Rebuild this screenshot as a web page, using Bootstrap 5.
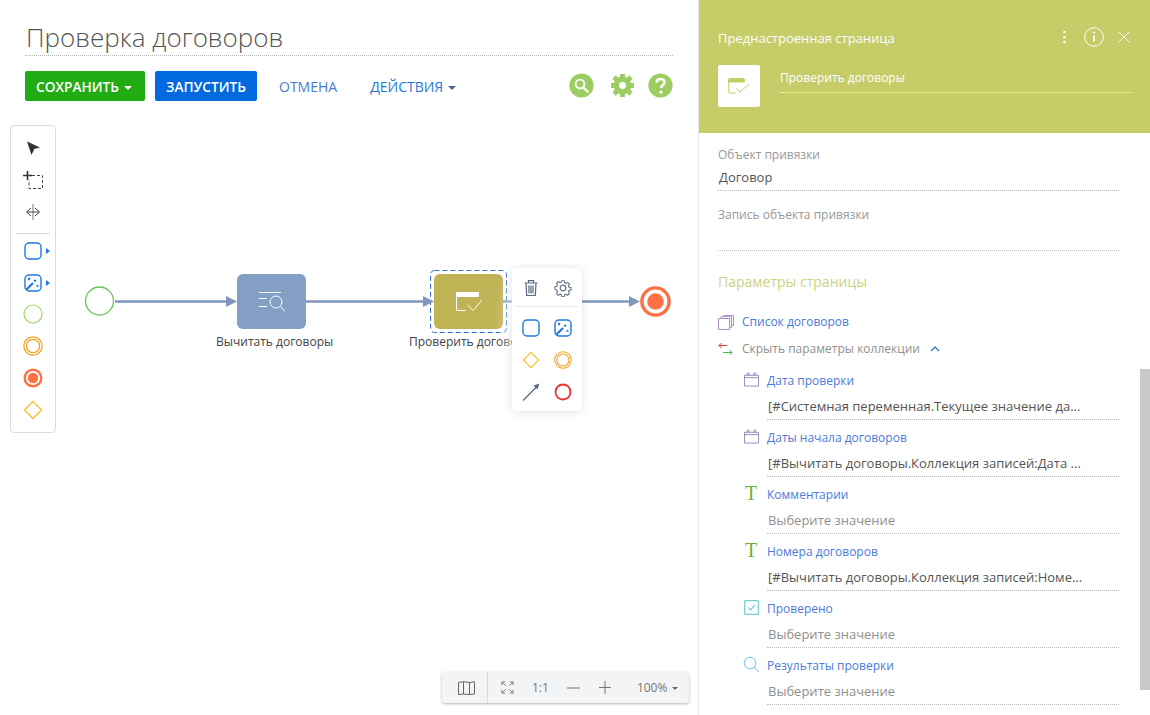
<!DOCTYPE html>
<html lang="ru">
<head>
  <meta charset="UTF-8" />
  <title>Проверка договоров</title>
  <link href="https://cdn.jsdelivr.net/npm/bootstrap@5.3.0/dist/css/bootstrap.min.css" rel="stylesheet" />
  <style>
    html, body { height: 100%; overflow: hidden; }
    body { font-family: "Open Sans", "Liberation Sans", sans-serif; font-size: 13px; color: #444; background: #fff; }
    .shell { height: 715px; }
    .left-col { width: 699px; border-right: 1px solid #e8e8e8; }
    .right-col { width: 451px; }

    .page-head { padding: 19px 25px 0 25px; height: 115px; }
    .page-title { font-size: 26px; font-weight: 300; line-height: 36px; color: #555; height: 37px; border-bottom: 1px dotted #b5b5b5; margin: 0; padding-left: 1px; }
    .action-bar { margin-top: 15px; height: 30px; }
    .act-btn { height: 30px; font-size: 13.7px; font-weight: 600; line-height: 31px; padding: 0 11px; border: 0; border-radius: 2px; color: #fff; }
    .act-save { background: #22ac14; width: 120px; margin-right: 10px; text-align: left; }
    .act-run { background: #0069e0; width: 102px; }
    .act-save:hover, .act-run:hover { color: #fff; }
    .act-link { font-size: 14px; color: #4a7bd8; text-decoration: none; }
    .act-cancel { margin-left: 22px; }
    .act-more { margin-left: 33px; color: #1c77e0; }
    .act-caret { display: inline-block; margin-left: 5px; vertical-align: 2px; border-top: 4px solid #4c6591; border-left: 4px solid transparent; border-right: 4px solid transparent; }
    .act-save .act-caret { border-top-color: #fff; margin-left: 5px; }
    .head-icons { margin-left: auto; margin-top: -2px; margin-right: 0; }
    .head-search { margin-right: 16px; }
    .head-gear { margin-right: 13px; }

    .canvas { height: 600px; }
    .tool-box { position: absolute; left: 10px; top: 10px; width: 46px; height: 308px; background: #fff; border: 1px solid #dcdcdc; border-radius: 4px; padding-top: 6px; }
    .tool-row { height: 32px; }
    .tool-first-event { margin-top: -1px; }
    .tool-sep { height: 1px; background: #d9d9d9; margin: 5px 5px 1px 5px; }
    .wires { position: absolute; left: 0; top: 0; }
    .node { position: absolute; top: 159px; width: 69px; height: 55px; border-radius: 6px; }
    .node-read { left: 237px; background: #839fc4; }
    .node-page { left: 434px; background: #c0b355; }
    .node-label { position: absolute; top: 219px; font-size: 12px; line-height: 16px; color: #444; white-space: nowrap; }
    .label-read { left: 216px; }
    .label-page { left: 409px; }
    .pop-menu { position: absolute; left: 512px; top: 153px; width: 70px; height: 143px; background: #fff; border-radius: 4px; box-shadow: 0 1px 8px rgba(60,70,90,.16), -8px 10px 14px -6px rgba(255,255,255,.9); }
    .pop-top { height: 39px; margin: 0 3px; border-bottom: 1px solid #e8eaf0; padding-top: 2px; display: grid; grid-template-columns: 32px 32px; justify-content: center; }
    .pop-grid { display: grid; grid-template-columns: 32px 32px; grid-auto-rows: 32px; justify-content: center; padding-top: 5px; }
    .zoom-bar { position: absolute; left: 442px; top: 557px; width: 247px; height: 31px; background: #f3f4f6; border-radius: 3px; box-shadow: 0 1px 3px rgba(0,0,0,.3); color: #777; font-size: 12px; }
    .zoom-map { width: 46px; height: 100%; border-right: 1px solid #d8d9dc; padding-left: 3px; }
    .zoom-items { flex: 1; padding-left: 13px; }
    .zoom-one { margin-left: 18px; }
    .zoom-minus { margin-left: 18px; }
    .zoom-plus { margin-left: 19px; }
    .zoom-pct { margin-left: 26px; }
    .zoom-caret { display: inline-block; margin-left: 5px; vertical-align: 2px; border-top: 3px solid #666; border-left: 3px solid transparent; border-right: 3px solid transparent; }

    .panel-head { height: 133px; background: #c5cc68; color: #fff; padding: 0 18px 0 19px; }
    .panel-title-row { height: 45px; padding-top: 19px; }
    .panel-title { font-size: 13px; font-weight: 500; line-height: 38px; height: 30px; }
    .panel-tools { margin-left: auto; margin-right: 2px; margin-top: 5px; height: 26px; }
    .panel-dots { margin-right: 18px; }
    .panel-info { margin-right: 14px; }
    .panel-sub { margin-top: 20px; }
    .panel-ico { width: 42px; height: 42px; background: #fff; border-radius: 2px; }
    .panel-name { flex: 1; margin-left: 20px; height: 28px; margin-bottom: 14px; font-size: 12px; font-weight: 500; line-height: 26px; border-bottom: 1px dotted #fff; }

    .panel-body { padding: 0 31px 0 19px; }
    .scroll-thumb { position: absolute; left: 441px; top: 369px; width: 10px; height: 321px; background: #c9c9c9; }
    .fld-cap { color: #999; font-size: 12px; line-height: 16px; }
    .fld-cap-top { margin-top: 14px; }
    .fld-cap-next { margin-top: 16px; }
    .fld-box { border-bottom: 1px dotted #b9b9b9; font-size: 13px; color: #555; line-height: 18px; height: 28px; }
    .fld-filled { padding: 5px 0 0 1px; }
    .sect-title { font-size: 14px; font-weight: 500; color: #cdd27f; line-height: 20px; margin-top: 21px; }
    .sub-link { color: #4a7bd8; font-size: 12px; line-height: 18px; }
    .sub-gray { color: #909090; font-size: 12px; line-height: 18px; }
    .param-ico { width: 24px; flex: none; }
    .sub-line { height: 18px; }
    .sub-list { margin-top: 21px; }
    .sub-coll { margin-top: 9px; }
    .sub-chev { margin-left: 10px; }
    #paramList { margin-top: 5px; }
    .param-row { height: 57px; margin-left: 25px; padding-top: 8px; }
    .param-head { height: 20px; }
    .param-ico-in { width: 24px; flex: none; margin-top: -4px; }
    .ico-cal, .ico-chk { margin-left: 1px; }
    .ico-txt { display: block; font: 20px/20px "Liberation Serif", serif; color: #6db02c; margin-left: 2px; }
    .param-val { margin-left: 24px; height: 29px; padding: 6px 0 0 1px; border-bottom: 1px dotted #b9b9b9; font-size: 13px; line-height: 18px; color: #555; white-space: nowrap; }
    .param-empty { color: #909090; }
  </style>
</head>
<body>
  <!-- повторяющиеся значки элементов процесса -->
  <svg width="0" height="0" class="position-absolute">
    <symbol id="ico-task" viewBox="0 0 18 18"><rect x="1" y="1" width="16" height="16" rx="4" fill="none" stroke="#1f78e0" stroke-width="1.4"/></symbol>
    <symbol id="ico-script" viewBox="0 0 18 18">
      <rect x="1" y="1" width="16" height="16" rx="4" fill="none" stroke="#1f78e0" stroke-width="1.4"/>
      <path d="M2.500 15.500 9 9" stroke="#1f78e0" stroke-width="2.200"/>
      <path d="M5 3l.6 1.200 1.200.2-.9.9.2 1.200-1.100-.6-1.100.6.2-1.200-.9-.9 1.200-.2zM11 5l.6 1 1.100.2-.8.8.2 1.100-1.100-.5-1 .5.2-1.100-.8-.8 1.100-.2zM13.500 10.500l.5.9 1 .2-.7.7.1 1-.9-.5-.9.5.1-1-.7-.7 1-.2z" fill="#1f78e0"/>
    </symbol>
    <symbol id="ico-gate" viewBox="0 0 20 20"><path d="M10 1.500 18.500 10 10 18.500 1.500 10z" fill="none" stroke="#fcbe2c" stroke-width="1.300"/></symbol>
    <symbol id="ico-mid" viewBox="0 0 20 20"><circle cx="10" cy="10" r="9.200" fill="none" stroke="#f5a021" stroke-width="1.200"/><circle cx="10" cy="10" r="6.700" fill="none" stroke="#f5a021" stroke-width="1.200"/></symbol>
  </svg>

  <div class="shell d-flex">
    <div class="left-col d-flex flex-column flex-shrink-0">
      <div class="page-head">
        <h1 class="page-title">Проверка договоров</h1>
        <div class="action-bar d-flex align-items-center">
          <button class="btn act-btn act-save">СОХРАНИТЬ<span class="act-caret"></span></button>
          <button class="btn act-btn act-run">ЗАПУСТИТЬ</button>
          <a class="act-link act-cancel" href="#">ОТМЕНА</a>
          <a class="act-link act-more" href="#">ДЕЙСТВИЯ<span class="act-caret"></span></a>
          <div class="head-icons d-flex align-items-center">
            <svg class="head-search" width="25" height="25" viewBox="0 0 26 26"><circle cx="13" cy="13" r="12.600" fill="#9ccd62"/><circle cx="11.500" cy="11.500" r="4.600" fill="none" stroke="#fff" stroke-width="2"/><path d="M15 15l4.500 4.500" stroke="#fff" stroke-width="2.200" stroke-linecap="round"/></svg>
            <svg class="head-gear" width="25" height="25" viewBox="0 0 26 26"><circle cx="13" cy="13" r="6.500" fill="none" stroke="#9ccd62" stroke-width="5.500"/><path d="M13 0.500v25M0.500 13h25M4.200 4.200l17.600 17.600M21.800 4.200 4.200 21.800" stroke="#9ccd62" stroke-width="5"/><circle cx="13" cy="13" r="3.600" fill="#fff"/><path d="M10.500 0h5v1h-5zM10.500 25h5v1h-5zM0 10.500h1v5H0zM25 10.500h1v5h-1z" fill="#fff"/></svg>
            <svg width="25" height="25" viewBox="0 0 26 26"><circle cx="13" cy="13" r="12.600" fill="#9ccd62"/><path d="M9 10.200c0-2.500 1.900-3.900 4.100-3.900 2.300 0 4 1.400 4 3.400 0 2.900-3.600 3-3.600 6" fill="none" stroke="#fff" stroke-width="2.600"/><circle cx="13.400" cy="20" r="1.700" fill="#fff"/></svg>
          </div>
        </div>
      </div>

      <div class="canvas position-relative">
        <svg class="wires" width="698" height="320">
          <rect x="430.500" y="155.500" width="76" height="62" rx="4" fill="none" stroke="#2f6fd6" stroke-dasharray="5 3"/>
          <g stroke="#7f97bb" stroke-width="2.400" fill="none">
            <path d="M115 186.500H230"/><path d="M306 186.500H428"/><path d="M503 186.500H633"/>
          </g>
          <g fill="#7f97bb">
            <path d="M226 181 237 186.500 226 192z"/><path d="M423 181 434 186.500 423 192z"/><path d="M629 181 640 186.500 629 192z"/>
          </g>
          <circle cx="99.500" cy="186" r="14" fill="#fff" stroke="#66c35a" stroke-width="1.300"/>
          <circle cx="655.500" cy="186.500" r="13.600" fill="#fff" stroke="#ff7143" stroke-width="3.400"/>
          <circle cx="655.500" cy="186.500" r="8.300" fill="#ff7143"/>
        </svg>

        <div class="node node-read d-flex align-items-center justify-content-center">
          <svg width="26" height="20" viewBox="0 0 26 20" fill="none" stroke="#fff" stroke-width="1"><path d="M0 .5H22M0 6.500H8M0 14.500H8"/><circle cx="17" cy="10" r="6"/><path d="M21.500 14.500 26 19.500"/></svg>
        </div>
        <div class="node-label label-read">Вычитать договоры</div>

        <div class="node node-page d-flex align-items-center justify-content-center">
          <svg width="26" height="19" viewBox="0 0 26 19" fill="none" stroke="#fff"><path d="M.5 .5h22v4H.5z" fill="#fff"/><path d="M.5 4.500v14H10"/><path d="M11 12.500l6 6L26 8"/></svg>
        </div>
        <div class="node-label label-page">Проверить договоры</div>

        <div class="pop-menu">
          <div class="pop-top align-items-center justify-items-center">
            <div class="d-flex justify-content-center"><svg width="18" height="18" viewBox="0 0 18 18" fill="none" stroke="#5a6680" stroke-width="1.200"><path d="M2.500 4H15.500M6.500 4V1.700H11.500V4M4 4l.7 12.500h8.600L14 4M7 6.500v8M9 6.500v8M11 6.500v8"/></svg></div>
            <div class="d-flex justify-content-center"><svg width="18" height="18" viewBox="0 0 18 18" fill="none" stroke="#66728a" stroke-width="1.200"><circle cx="9" cy="9" r="2.800"/><path d="M7.600 1h2.800l.4 2.200 1.500.7 1.900-1.200 2 2-1.200 1.900.7 1.500 2.200.4v2.800l-2.200.4-.7 1.500 1.200 1.900-2 2-1.900-1.200-1.500.7-.4 2.200H7.600l-.4-2.200-1.500-.7-1.900 1.200-2-2 1.200-1.900-.7-1.500L.1 10.400V7.600l2.200-.4.7-1.500-1.200-1.900 2-2 1.900 1.200 1.500-.7z" transform="translate(.9 .9) scale(.9)"/></svg></div>
          </div>
          <div class="pop-grid">
            <div class="d-flex align-items-center justify-content-center"><svg width="18" height="18"><use href="#ico-task"/></svg></div>
            <div class="d-flex align-items-center justify-content-center"><svg width="18" height="18"><use href="#ico-script"/></svg></div>
            <div class="d-flex align-items-center justify-content-center"><svg width="18" height="18"><use href="#ico-gate"/></svg></div>
            <div class="d-flex align-items-center justify-content-center"><svg width="18" height="18"><use href="#ico-mid"/></svg></div>
            <div class="d-flex align-items-center justify-content-center"><svg width="18" height="18" viewBox="0 0 18 18"><path d="M1 17.500 15 3.500" stroke="#5a6680" stroke-width="1.300"/><path d="M17.500 .5 15.500 6.500 11.500 2.500z" fill="#5a6680"/></svg></div>
            <div class="d-flex align-items-center justify-content-center"><svg width="18" height="18" viewBox="0 0 18 18"><circle cx="9" cy="9" r="7.500" fill="none" stroke="#ee2f2f" stroke-width="1.800"/></svg></div>
          </div>
        </div>

        <div class="tool-box">
          <div class="tool-row d-flex align-items-center justify-content-center">
            <svg width="16" height="16" viewBox="0 0 16 16"><path d="M2 1.500 15 7.500 9.300 9 6.500 15z" fill="#333"/></svg>
          </div>
          <div class="tool-row d-flex align-items-center justify-content-center">
            <svg width="22" height="20" viewBox="0 0 22 20" fill="none"><path d="M5.500 1v9M1 5.500h9" stroke="#333" stroke-width="1.600"/><path d="M10 5.500h10.500V18.500H7V10" stroke="#444" stroke-dasharray="3 2"/></svg>
          </div>
          <div class="tool-row d-flex align-items-center justify-content-center">
            <svg width="16" height="18" viewBox="0 0 16 18" fill="none" stroke="#444"><path d="M8 1v16" stroke="#777"/><path d="M6 5 1.500 9 6 13M10 5l4.500 4L10 13M2 9h12"/></svg>
          </div>
          <div class="tool-sep"></div>
          <div class="tool-row d-flex align-items-center justify-content-center gap-1 ps-2">
            <svg width="18" height="18"><use href="#ico-task"/></svg>
            <svg width="4" height="6" viewBox="0 0 4 6"><path d="M0 0l4 3-4 3z" fill="#1f78e0"/></svg>
          </div>
          <div class="tool-row d-flex align-items-center justify-content-center gap-1 ps-2">
            <svg width="18" height="18"><use href="#ico-script"/></svg>
            <svg width="4" height="6" viewBox="0 0 4 6"><path d="M0 0l4 3-4 3z" fill="#1f78e0"/></svg>
          </div>
          <div class="tool-row tool-first-event d-flex align-items-center justify-content-center">
            <svg width="20" height="20" viewBox="0 0 20 20"><circle cx="10" cy="10" r="9" fill="none" stroke="#a0d468" stroke-width="1.200"/></svg>
          </div>
          <div class="tool-row d-flex align-items-center justify-content-center">
            <svg width="20" height="20"><use href="#ico-mid"/></svg>
          </div>
          <div class="tool-row d-flex align-items-center justify-content-center">
            <svg width="20" height="20" viewBox="0 0 20 20"><circle cx="10" cy="10" r="8.300" fill="#fff" stroke="#ff7143" stroke-width="2.400"/><circle cx="10" cy="10" r="5.200" fill="#ff7143"/></svg>
          </div>
          <div class="tool-row d-flex align-items-center justify-content-center">
            <svg width="20" height="20"><use href="#ico-gate"/></svg>
          </div>
        </div>

        <div class="zoom-bar d-flex align-items-center">
          <div class="zoom-map d-flex align-items-center justify-content-center">
            <svg width="17" height="14" viewBox="0 0 17 14" fill="none" stroke="#666"><path d="M.5 1.500 5.500 .7l6 .8 5-.8V13l-5 .5-6-.5-5 .5zM5.500 .7V13M11.500 1.500V13.500"/></svg>
          </div>
          <div class="zoom-items d-flex align-items-center">
            <svg width="13" height="13" viewBox="0 0 14 14" fill="none" stroke="#777"><path d="M1 4.500V1H4.500M9.500 1H13V4.500M13 9.500V13H9.500M4.500 13H1V9.500M1 1l4 4M13 1 9 5M13 13 9 9M1 13l4-4"/></svg>
            <span class="zoom-one">1:1</span>
            <svg class="zoom-minus" width="13" height="2"><path d="M0 1H13" stroke="#777"/></svg>
            <svg class="zoom-plus" width="12" height="13"><path d="M0 6.500H12M6 0V13" stroke="#777"/></svg>
            <span class="zoom-pct">100%<span class="zoom-caret"></span></span>
          </div>
        </div>
      </div>
    </div>

    <div class="right-col position-relative flex-shrink-0">
      <div class="panel-head">
        <div class="panel-title-row d-flex">
          <div class="panel-title">Преднастроенная страница</div>
          <div class="panel-tools d-flex align-items-center">
            <svg class="panel-dots" width="3" height="14"><circle cx="1.500" cy="2" r="1.300" fill="#fff"/><circle cx="1.500" cy="7" r="1.300" fill="#fff"/><circle cx="1.500" cy="12" r="1.300" fill="#fff"/></svg>
            <svg class="panel-info" width="20" height="20" viewBox="0 0 20 20" fill="none" stroke="#fff"><circle cx="10" cy="10" r="9.300"/><path d="M10 8.500v6" stroke-width="1.800"/><circle cx="10" cy="5.500" r="1.100" fill="#fff" stroke="none"/></svg>
            <svg width="12" height="12" viewBox="0 0 12 12"><path d="M.5 .5l11 11M11.500 .5l-11 11" stroke="#fff"/></svg>
          </div>
        </div>
        <div class="panel-sub d-flex align-items-end">
          <div class="panel-ico d-flex align-items-center justify-content-center">
            <svg width="22" height="16" viewBox="0 0 22 16" fill="none" stroke="#c5cc68"><path d="M.5 2A1.500 1.500 0 0 1 2 .5h13A1.500 1.500 0 0 1 16.500 2V4H.5z" fill="#c5cc68"/><path d="M.8 4v11h7"/><path d="M8.500 10.500l3.500 3.500 9-8" /></svg>
          </div>
          <div class="panel-name">Проверить договоры</div>
        </div>
      </div>

      <div class="panel-body">
        <div class="fld-cap fld-cap-top">Объект привязки</div>
        <div class="fld-box fld-filled">Договор</div>
        <div class="fld-cap fld-cap-next">Запись объекта привязки</div>
        <div class="fld-box"></div>
        <div class="sect-title">Параметры страницы</div>

        <div class="sub-line sub-list d-flex align-items-center">
          <div class="param-ico"><svg class="d-block" width="16" height="15" viewBox="0 0 16 15" fill="none" stroke="#b08ec9"><path d="M.5 3.500h11v11H.5zM3 3.500V1.700h10.500V12.500H11.500M5.500 1.700V.5H15.500V10.500H13.500"/></svg></div>
          <span class="sub-link">Список договоров</span>
        </div>
        <div class="sub-line sub-coll d-flex align-items-center">
          <div class="param-ico"><svg class="d-block" width="15" height="14" viewBox="0 0 15 14" fill="none"><path d="M1 3.500h8M3.500 1 1 3.500 3.500 6" stroke="#e0333c"/><path d="M5 10.500h9M11.500 8 14 10.500 11.500 13" stroke="#4cb648"/></svg></div>
          <span class="sub-gray">Скрыть параметры коллекции</span>
          <svg class="sub-chev" width="10" height="6" viewBox="0 0 10 6"><path d="M1 5l4-4 4 4" fill="none" stroke="#3f78c8" stroke-width="1.300"/></svg>
        </div>

        <div id="paramList"></div>
      </div>

      <div class="scroll-thumb"></div>
    </div>
  </div>

  <script src="https://cdn.jsdelivr.net/npm/bootstrap@5.3.0/dist/js/bootstrap.bundle.min.js"></script>
  <script>
    const calIcon = '<svg class="d-block ico-cal" width="15" height="15" viewBox="0 0 16 15" fill="none" stroke="#8f8ab8"><path d="M.5 3h15v11.500H.5zM.5 5.500h15M3.500 3V.7h2V3M10.500 3V.7h2V3"/></svg>';
    const txtIcon = '<span class="ico-txt">T</span>';
    const chkIcon = '<svg class="d-block ico-chk" width="15" height="15" viewBox="0 0 15 15" fill="none"><path d="M.7 .7h13.600v13.600H.7z" stroke="#55c4c4"/><path d="M4.500 7.500l2.200 2.500 4-5" stroke="#55c4c4" stroke-width="1.100"/></svg>';
    const findIcon = '<svg class="d-block" width="17" height="17" viewBox="0 0 17 17" fill="none" stroke="#6fc6ea"><circle cx="7" cy="7" r="5.800"/><path d="M11 11.200 16 16"/></svg>';
    const params = [
      [calIcon, 'Дата проверки', '[#Системная переменная.Текущее значение да...', false],
      [calIcon, 'Даты начала договоров', '[#Вычитать договоры.Коллекция записей:Дата ...', false],
      [txtIcon, 'Комментарии', 'Выберите значение', true],
      [txtIcon, 'Номера договоров', '[#Вычитать договоры.Коллекция записей:Номе...', false],
      [chkIcon, 'Проверено', 'Выберите значение', true],
      [findIcon, 'Результаты проверки', 'Выберите значение', true]
    ];
    document.getElementById('paramList').innerHTML = params.map(p =>
      '<div class="param-row"><div class="param-head d-flex align-items-center"><div class="param-ico-in">' + p[0] + '</div><span class="sub-link">' + p[1] + '</span></div>' +
      '<div class="param-val' + (p[3] ? ' param-empty' : '') + '">' + p[2] + '</div></div>'
    ).join('');
  </script>
</body>
</html>
